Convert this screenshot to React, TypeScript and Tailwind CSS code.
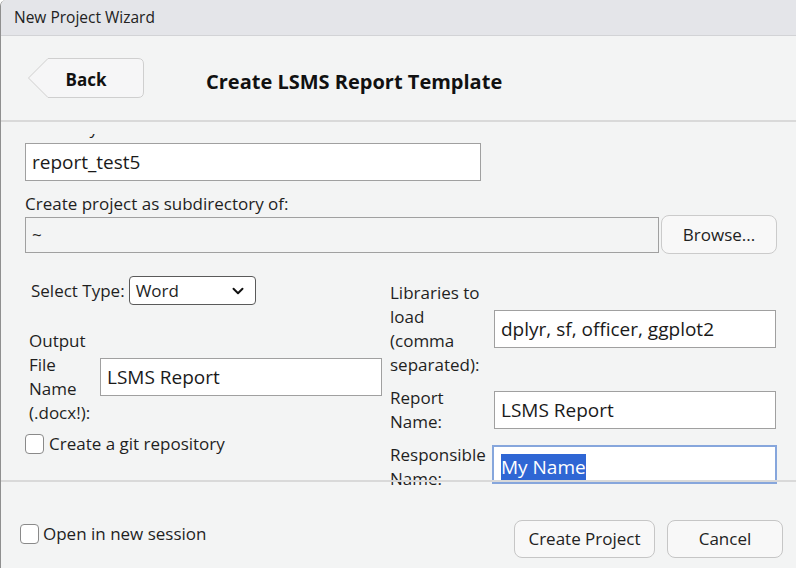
import React from 'react';
import { ChevronDown } from 'lucide-react';

const font = { fontFamily: '"Open Sans", "Noto Sans", sans-serif' };

const TextBox: React.FC<{ value: string; className?: string }> = ({ value, className = '' }) => (
    <div className={`flex items-center flex-shrink-0 bg-white border border-[#a0a0a0] px-[6px] text-[19px] text-[#1a1a1a] ${className}`}>
        {value}
    </div>
);

const Checkbox: React.FC = () => (
    <span className="inline-block w-[19px] h-[20px] rounded-[4px] border border-[#8a8a8a] bg-white flex-shrink-0" />
);

export default function App() {
    return (
        <div
            className="w-[796px] h-[568px] flex flex-col bg-[#f3f4f4] border-l border-[#8f8f8f] rounded-tl-[6px] overflow-hidden text-[#1f1f1f]"
            style={font}
        >
            {/* Title bar */}
            <div className="h-[36px] flex-shrink-0 flex items-center px-[13px] bg-[#e4e5e9] border-b border-[#d2d3d6] text-[15.5px] text-[#222]">
                New Project Wizard
            </div>

            {/* Header */}
            <div className="h-[84px] flex-shrink-0 flex items-center pl-[27px]">
                <button className="relative w-[116px] h-[40px] flex items-center justify-center">
                    <svg className="absolute inset-0" width="116" height="40" viewBox="0 0 116 40">
                        <path
                            d="M0.5 20 L20 0.5 H110 Q115.5 0.5 115.5 6 V34 Q115.5 39.5 110 39.5 H20 Z"
                            fill="#f6f6f7"
                            stroke="#cfcfcf"
                        />
                    </svg>
                    <span className="relative mt-[3px] font-bold text-[17px] text-[#111]">Back</span>
                </button>
                <h1 className="ml-[62px] mt-[8px] font-bold text-[20px] text-[#111]">Create LSMS Report Template</h1>
            </div>

            <div className="h-[2px] flex-shrink-0 bg-[#d9d9d9]" />
            <div className="h-[12px] flex-shrink-0" />

            {/* Scrolled content */}
            <div className="h-[353px] flex-shrink-0 overflow-hidden">
                <div className="-mt-[18px] px-[24px] flex flex-col">
                    <div className="h-[24px] leading-[24px] text-[17px]">Directory name:</div>
                    <TextBox value="report_test5" className="mt-[3px] w-[456px] h-[38px]" />

                    <div className="mt-[11px] h-[24px] leading-[24px] text-[17px]">Create project as subdirectory of:</div>
                    <div className="-mt-[1px] flex items-center gap-[2px]">
                        <div className="w-[634px] h-[36px] flex-shrink-0 flex items-center px-[6px] border border-[#a0a0a0] text-[17px]">~</div>
                        <button className="w-[116px] h-[39px] flex-shrink-0 rounded-[8px] border border-[#cbcbcb] bg-[#f8f8f8] text-[17px] text-[#222]">
                            Browse...
                        </button>
                    </div>

                    {/* Two columns */}
                    <div className="mt-[22px] flex">
                        <div className="w-[365px] flex-shrink-0 flex flex-col">
                            <div className="flex items-center pl-[6px] h-[29px]">
                                <span className="text-[17px]">Select Type:</span>
                                <div className="ml-[4px] w-[127px] h-[29px] flex items-center justify-between pl-[6px] pr-[8px] bg-white border border-[#5a5a5a] rounded-[4px] text-[17px]">
                                    Word
                                    <ChevronDown size={18} strokeWidth={2.6} className="text-[#111]" />
                                </div>
                            </div>
                            <div className="mt-[24px] flex items-center pl-[4px]">
                                <div className="w-[71px] flex-shrink-0 text-[17px] leading-[24px]">
                                    Output<br />File<br />Name<br />(.docx!):
                                </div>
                                <TextBox value="LSMS Report" className="w-[282px] h-[38px]" />
                            </div>
                            <label className="mt-[6px] flex items-center gap-[5px] text-[17px]">
                                <Checkbox />
                                Create a git repository
                            </label>
                        </div>

                        <div className="flex-shrink-0 flex flex-col pt-[5px]">
                            <div className="flex items-center">
                                <div className="w-[104px] flex-shrink-0 text-[17px] leading-[24px]">
                                    Libraries to<br />load<br />(comma<br />separated):
                                </div>
                                <TextBox value="dplyr, sf, officer, ggplot2" className="w-[282px] h-[38px]" />
                            </div>
                            <div className="mt-[9px] flex items-center">
                                <div className="w-[104px] flex-shrink-0 text-[17px] leading-[24px]">
                                    Report<br />Name:
                                </div>
                                <TextBox value="LSMS Report" className="w-[282px] h-[38px]" />
                            </div>
                            <div className="mt-[9px] flex items-start">
                                <div className="w-[102px] flex-shrink-0 text-[17px] leading-[24px]">
                                    Responsible<br />Name:
                                </div>
                                <div className="mt-[2px] w-[285px] h-[39px] flex-shrink-0 flex items-center bg-white border-2 border-[#86a6dc] px-[7px] text-[19px]">
                                    <span className="mt-[4px] bg-[#2f66d4] text-white leading-[26px]">My Name</span>
                                </div>
                            </div>
                        </div>
                    </div>
                </div>
            </div>

            <div className="relative z-10 -mt-[7px] h-[2px] flex-shrink-0 bg-[#d9d9d9]" />

            {/* Footer */}
            <div className="flex-1 flex items-start justify-between pl-[19px] pr-[13px] pt-[38px]">
                <label className="mt-[1px] flex items-center gap-[4px] text-[17px]">
                    <Checkbox />
                    Open in new session
                </label>
                <div className="flex items-center gap-[12px]">
                    <button className="w-[141px] h-[38px] rounded-[8px] border border-[#c6c6c6] bg-[#f8f8f8] text-[17px] text-[#222]">
                        Create Project
                    </button>
                    <button className="w-[116px] h-[38px] rounded-[8px] border border-[#c6c6c6] bg-[#f8f8f8] text-[17px] text-[#222]">
                        Cancel
                    </button>
                </div>
            </div>
        </div>
    );
}
